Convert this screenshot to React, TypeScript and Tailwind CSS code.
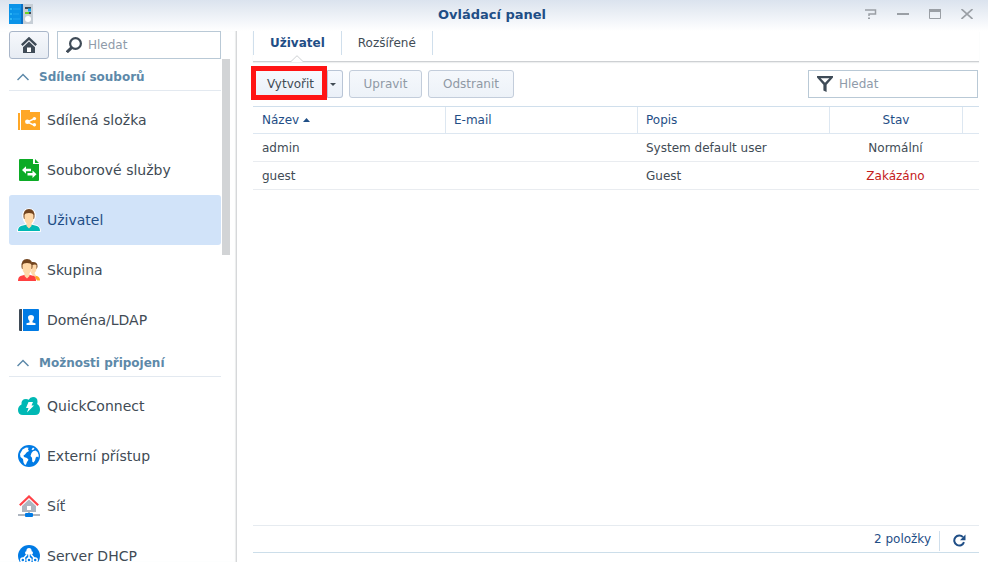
import React, { useState } from "react";

type IconProps = { className?: string };

const AppLogo = () => (
  <svg width="24" height="20" viewBox="0 0 24 20" aria-hidden="true">
    <rect x="12" width="12" height="20" fill="#c6ced6" />
    <rect width="14" height="20" fill="#0a93e8" />
    <rect x="12" width="2" height="20" fill="#0a6fc4" />
    <path d="M1 5h2M1 10h2M1 15h2" stroke="#2bb5f5" strokeWidth="2" />
    <path d="M4 5h7M4 10h6M4 15h7" stroke="#22a6f0" strokeWidth="1" />
    <path d="M16 4h6" stroke="#3d4852" strokeWidth="2" />
    <path d="M19 6h3" stroke="#16a8f0" strokeWidth="3" />
    <path d="M16 9h4" stroke="#6ed321" strokeWidth="2" />
    <path d="M20 9h2" stroke="#3d4852" strokeWidth="2" />
    <circle cx="19" cy="15" r="3" fill="#fff" />
  </svg>
);

const HomeIcon = () => (
  <svg width="16" height="16" viewBox="0 0 16 16" aria-hidden="true">
    <path d="M.8 8.200 8 1.400l7.200 6.800" fill="none" stroke="#3f4b57" strokeWidth="2.400" />
    <path d="M8 4.600 14 10.200V16H2v-5.800z" fill="#3f4b57" />
    <path d="M6 10.500h4V15H6z" fill="#fff" />
  </svg>
);

const SearchIcon = ({ className }: IconProps) => (
  <svg className={className} width="16" height="16" viewBox="0 0 16 16" fill="none" stroke="#3f4b57" aria-hidden="true">
    <circle cx="9.500" cy="6.500" r="5.400" strokeWidth="2.200" />
    <path d="M5.600 10.600.8 15.200" strokeWidth="3" />
  </svg>
);

const FilterIcon = ({ className }: IconProps) => (
  <svg className={className} width="16" height="16" viewBox="0 0 16 16" aria-hidden="true">
    <path
      fillRule="evenodd"
      fill="#3f4b57"
      d="M0 0h16v1.500L9.600 8.800V16L6.400 14.500V8.800L0 1.500zM3.600 2.200 8 6.800l4.400-4.600z"
    />
  </svg>
);

const FolderIcon = () => (
  <svg width="22" height="20" viewBox="0 0 22 20" aria-hidden="true">
    <path d="M0 3h2v17H0zM3 0h9v2h10v18H3z" fill="#ffa726" />
    <path d="M17 8.400 9.300 12 17 15.600" fill="none" stroke="#fff" strokeWidth="1.600" />
    <circle cx="9.300" cy="11.700" r="2.200" fill="#fff" />
    <circle cx="16.400" cy="8.600" r="1.700" fill="#fff" />
    <circle cx="16.400" cy="14.800" r="1.700" fill="#fff" />
  </svg>
);

const FileServiceIcon = () => (
  <svg width="22" height="22" viewBox="0 0 22 22" aria-hidden="true">
    <path d="M1 1q0-1 1-1h13v5h6v16q0 1-1 1H2q-1 0-1-1z" fill="#0cab26" />
    <path d="M17 0 21 4h-4z" fill="#0cab26" />
    <path d="M4 11 8 7.200v2.600h5v2.400H8v2.600z" fill="#fff" />
    <path d="M18.500 15.200 14.500 11.400V14H9.500v2.400h5V19z" fill="#fff" />
  </svg>
);

const UserIcon = () => (
  <svg width="24" height="24" viewBox="-1 -1 24 24" aria-hidden="true">
    <path
      d="M11-.2q6.800 0 6.300 8L16 12l-2 3.400 5.500 1.200Q22.500 18 22.500 22.500h-23q0-4.500 3-5.900L8 15.400 6 12 4.700 7.800Q4.200-.2 11-.2z"
      fill="#fff"
      stroke="#fff"
      strokeWidth="1"
    />
    <path d="M0 22q0-4 3-5l5-1.200h6l5 1.200q3 1 3 5z" fill="#00b8b4" />
    <path d="M5.500 8Q5 0 11 0t5.500 8L16 10H6z" fill="#72441e" />
    <path d="M6.500 6Q7 4 11 4t4.500 2v4q0 2.500-2 4.500v2.500L11 19.500 8.500 17v-2.500q-2-2-2-4.500z" fill="#ffd8a8" />
  </svg>
);

const GroupIcon = () => (
  <svg width="22" height="22" viewBox="0 0 22 22" aria-hidden="true">
    <path d="M16 16.500l3 .5q3 1 3 4.500h-3z" fill="#ffa726" />
    <path d="M14 3q6-.5 5.500 5l-1 2H14z" fill="#72441e" />
    <path d="M14 6q3.500-1 4.500 0v4q0 2-2 4l1.500 3-1.500 1.500L13 14z" fill="#ffd8a8" />
    <path d="M0 22q0-4 2.500-5L7 15.800h4l5 1.200q2 1 2 5z" fill="#ff4040" />
    <path d="M3.500 8Q3 0 9 0t5.500 8L14 10H4z" fill="#72441e" />
    <path d="M4.500 6Q5 4 9 4t4.500 2v4q0 2.500-2 4.500v2.500L9 19.500 6.500 17v-2.500q-2-2-2-4.500z" fill="#ffd8a8" />
  </svg>
);

const DomainIcon = () => (
  <svg width="22" height="22" viewBox="0 0 22 22" aria-hidden="true">
    <path d="M2 0h2v22H2q-1 0-1-1V1q0-1 1-1z" fill="#3f4b57" />
    <path d="M5 0h15q1 0 1 1v20q0 1-1 1H5z" fill="#007be5" />
    <path d="M10 8.500Q10 6 13 6t3 2.500q0 2-1.500 3.500v1.500l3 .7V16h-9v-1.800l3-.7V12Q10 10.500 10 8.500z" fill="#fff" />
  </svg>
);

const CloudIcon = () => (
  <svg width="22" height="18" viewBox="0 0 22 18" aria-hidden="true">
    <path d="M3.500 7.500Q3 2 8 2q1.500 0 2.700.7Q12 0 15 0q4.500 0 4.500 4.500 0 1.500-.4 2.500Q22 8.500 22 12.500q0 5.500-5 5.500H5Q0 18 0 13q0-4 3.500-5.500z" fill="#00b8b4" />
    <path d="M10.500 5H15l-1.500 3.500H16L9 15.500l1.500-4.500H8z" fill="#fff" />
  </svg>
);

const GlobeIcon = () => (
  <svg width="22" height="22" viewBox="0 0 22 22" aria-hidden="true">
    <circle cx="11" cy="11" r="11" fill="#007be5" />
    <path d="M4.500 4.500 8 2.500l2.500.2-.5 1.800 1 1.500-2.200 1.200L7 9.500l-1.500 1 .5 1.500 3 1 1.500 1.800-1.500 2.200-1 2.500-1 .5-1.500-2.500-.5-3.500-2.500-2L2 9z" fill="#fff" />
    <path d="m13.500 8 1.500-1.800 2.500-.7 2 1.500 1.200 3-.2 2.500-1.500-1-1.200 1-.8 3-1.500 2-1.200-.8-.3-4-1.500-1.700z" fill="#fff" />
    <path d="m13.500 4.500 1.500-2 1.500 1-1.500 1.700z" fill="#fff" />
  </svg>
);

const NetworkIcon = () => (
  <svg width="22" height="22" viewBox="0 0 22 22" aria-hidden="true">
    <path d="M11 4.500 18 11v6H4v-6zM0 19h22v2H0zM10 16h2v3h-2z" fill="#adb5bf" />
    <path d="M9 11h4v4H9z" fill="#fff" />
    <path d="M1.800 10.300 11 1.500l9.200 8.800" fill="none" stroke="#ff4248" strokeWidth="2.200" />
    <rect x="7" y="18" width="8" height="4" rx="1" fill="#007be5" />
  </svg>
);

const DhcpIcon = () => (
  <svg width="22" height="22" viewBox="0 0 22 22" aria-hidden="true">
    <circle cx="11" cy="11" r="11" fill="#007be5" />
    <path d="M7 8q0-1.500 1.300-1.800Q8.500 3 11 3t2.700 3.200Q15 6.500 15 8t-2 1.500H9Q7 9.500 7 8z" fill="#fff" />
    <path d="M11 9v4M9 9.500 5 14M13 9.500 17 14" stroke="#fff" strokeWidth="1.500" />
    <g fill="#007be5" stroke="#fff" strokeWidth="1.500">
      <circle cx="4.800" cy="15" r="2" />
      <circle cx="11" cy="15" r="2" />
      <circle cx="17.200" cy="15" r="2" />
    </g>
  </svg>
);

const RefreshIcon = () => (
  <svg width="13" height="13" viewBox="0 0 13 13" aria-hidden="true">
    <path d="M10 3.200A5 5 0 1 0 11 8.200" fill="none" stroke="#1f4e86" strokeWidth="2" />
    <path d="M12.500.5v5.700H7z" fill="#1f4e86" />
  </svg>
);

const sections = [
  {
    title: "Sdílení souborů",
    items: [
      { id: "share", label: "Sdílená složka", Icon: FolderIcon },
      { id: "file", label: "Souborové služby", Icon: FileServiceIcon },
      { id: "user", label: "Uživatel", Icon: UserIcon },
      { id: "group", label: "Skupina", Icon: GroupIcon },
      { id: "domain", label: "Doména/LDAP", Icon: DomainIcon },
    ],
  },
  {
    title: "Možnosti připojení",
    items: [
      { id: "quickconnect", label: "QuickConnect", Icon: CloudIcon },
      { id: "external", label: "Externí přístup", Icon: GlobeIcon },
      { id: "network", label: "Síť", Icon: NetworkIcon },
      { id: "dhcp", label: "Server DHCP", Icon: DhcpIcon },
    ],
  },
];

const users = [
  { name: "admin", email: "", description: "System default user", status: "Normální", disabled: false },
  { name: "guest", email: "", description: "Guest", status: "Zakázáno", disabled: true },
];

const TitleBar = () => (
  <header className="grid h-[31px] shrink-0 grid-cols-[1fr_auto_1fr] items-center bg-linear-to-b from-[#dbe3ee] to-white pr-[13px] pl-[9px]">
    <div className="pb-[3px]">
      <AppLogo />
    </div>
    <h1 className="pb-[2px] text-[13px] leading-4 font-bold text-[#1f4e86]">Ovládací panel</h1>
    <div className="flex items-center justify-end gap-4 pb-[3px]">
      <button aria-label="Nápověda" className="flex h-4 w-4 items-center justify-center">
        <svg width="12" height="10" viewBox="0 0 12 10" fill="none" stroke="#9a9fa5" strokeWidth="1.500">
          <path d="M0 1h10.500v4H4v2" />
          <path d="M3 9.200h2" />
        </svg>
      </button>
      <button aria-label="Minimalizovat" className="flex h-4 w-4 items-center justify-center">
        <svg width="12" height="2" viewBox="0 0 12 2">
          <path d="M0 1h12" stroke="#9a9fa5" strokeWidth="2" />
        </svg>
      </button>
      <button aria-label="Maximalizovat" className="flex h-4 w-4 items-center justify-center">
        <svg width="12" height="10" viewBox="0 0 12 10" fill="none" stroke="#9a9fa5">
          <path d="M0 1.500h12" strokeWidth="3" />
          <path d="M.5 1v8.500h11V1" />
        </svg>
      </button>
      <button aria-label="Zavřít" className="flex h-4 w-4 items-center justify-center">
        <svg width="12" height="10" viewBox="0 0 12 10" fill="none" stroke="#9a9fa5" strokeWidth="1.600">
          <path d="M.5 0l11 10M11.500 0l-11 10" />
        </svg>
      </button>
    </div>
  </header>
);

interface SidebarProps {
  active: string;
  onSelect: (id: string) => void;
}

const Sidebar = ({ active, onSelect }: SidebarProps) => (
  <aside className="flex w-[237px] shrink-0 flex-col border-r border-[#d6d8da] pl-[9px] shadow-[inset_-1px_0_1px_#eceded]">
    <div className="flex w-[212px] shrink-0 gap-2">
      <button
        aria-label="Domů"
        className="flex h-7 w-10 items-center justify-center rounded-[3px] border border-[#a9b6c9] bg-linear-to-b from-[#f6f8fc] to-[#e7ecf3]"
      >
        <HomeIcon />
      </button>
      <label className="flex h-7 min-w-0 flex-1 items-center gap-[6px] border border-[#b9c9d6] bg-white pl-2">
        <SearchIcon className="shrink-0" />
        <input
          type="text"
          aria-label="Hledat v nastavení"
          placeholder="Hledat"
          className="min-w-0 flex-1 text-xs text-[#414b55] outline-none placeholder:text-[#8f9baa]"
        />
      </label>
    </div>
    <div className="flex min-h-0 flex-1 gap-px">
      <nav className="w-[212px] overflow-hidden">
        {sections.map((section) => (
          <section key={section.title}>
            <button className="mb-1 flex h-8 w-full items-center gap-[10px] border-b border-[#e3e9f0] pt-1 pl-2 text-xs font-bold text-[#5d89a9]">
              <svg width="12" height="8" viewBox="0 0 12 8" fill="none" stroke="#5d89a9" strokeWidth="1.500">
                <path d="M.5 7 6 1.500 11.500 7" />
              </svg>
              {section.title}
            </button>
            <ul>
              {section.items.map(({ id, label, Icon }) => (
                <li key={id}>
                  <button
                    onClick={() => onSelect(id)}
                    className={`flex h-[50px] w-full items-center gap-[6px] rounded-[3px] pl-2 text-sm leading-4 ${
                      id === active ? "bg-[#d1e3f9] text-[#1f4e86]" : "text-[#414b55]"
                    }`}
                  >
                    <span className="flex w-6 shrink-0 justify-center">
                      <Icon />
                    </span>
                    {label}
                  </button>
                </li>
              ))}
            </ul>
          </section>
        ))}
      </nav>
      <div className="h-[196px] w-2 bg-[#d2d4d6]" />
    </div>
  </aside>
);

const App = () => {
  const [active, setActive] = useState("user");

  return (
    <div className="flex h-screen flex-col overflow-hidden bg-white font-['DejaVu_Sans',Verdana,sans-serif] text-xs text-[#414b55]">
      <TitleBar />
      <div className="flex min-h-0 flex-1">
        <Sidebar active={active} onSelect={setActive} />

        <main className="flex min-w-0 flex-1 flex-col pr-[9px] pb-[9px] pl-4">
          <div role="tablist" className="flex h-[31px] shrink-0 border-b border-[#cdd0d3] shadow-[0_1px_1px_#eeeff0]">
            <button
              role="tab"
              aria-selected="true"
              className="relative h-6 border-x border-[#d0dfec] px-4 font-bold text-[#1f4e86]"
            >
              Uživatel
              {/* pointer rising from the line under the tabs */}
              <svg className="absolute top-6 left-[37px]" width="12" height="7" viewBox="0 0 12 7">
                <path d="M0 6.500 6 .7l6 5.800V7H0z" fill="#fff" />
                <path d="M0 6.500 6 .7l6 5.800" fill="none" stroke="#cdd0d3" />
              </svg>
            </button>
            <button role="tab" aria-selected="false" className="h-6 border-r border-[#d0dfec] px-4">
              Rozšířené
            </button>
          </div>

          <div className="flex shrink-0 items-center justify-between py-2">
            <div className="flex gap-[6px]">
              <div className="relative flex">
                <button className="h-7 w-[75px] rounded-l-[3px] border border-[#b9c5d6] bg-linear-to-b from-[#f6f9fe] to-[#eaf0f8]">
                  Vytvořit
                </button>
                <button
                  aria-label="Další možnosti"
                  className="flex h-7 w-[15px] items-center rounded-r-[3px] border border-l-0 border-[#b9c5d6] bg-linear-to-b from-[#f6f9fe] to-[#eaf0f8] pl-[2px]"
                >
                  <svg width="6" height="3" viewBox="0 0 6 3">
                    <path d="M0 0h6L3 3z" fill="#414b55" />
                  </svg>
                </button>
                <div className="pointer-events-none absolute -top-1 -left-[2px] h-[34px] w-[76px] border-5 border-[#ff1414]" />
              </div>
              <button
                disabled
                className="h-7 w-[73px] rounded-[3px] border border-[#c3cddb] bg-linear-to-b from-[#f5f8fc] to-[#edf2f8] text-[#8f99a5]"
              >
                Upravit
              </button>
              <button
                disabled
                className="h-7 w-[86px] rounded-[3px] border border-[#c3cddb] bg-linear-to-b from-[#f5f8fc] to-[#edf2f8] text-[#8f99a5]"
              >
                Odstranit
              </button>
            </div>
            <label className="mr-px flex h-7 w-[170px] items-center gap-[6px] border border-[#b9c9d6] bg-white pl-2">
              <FilterIcon className="shrink-0" />
              <input
                type="text"
                aria-label="Filtrovat uživatele"
                placeholder="Hledat"
                className="min-w-0 flex-1 text-xs text-[#414b55] outline-none placeholder:text-[#8f9baa]"
              />
            </label>
          </div>

          <table className="w-full table-fixed border-separate border-spacing-0 border-t border-[#d0dfec] text-left">
            <thead className="text-[#1f4e86]">
              <tr className="h-[27px]">
                <th className="w-[193px] border-r border-b border-[#dde7f1] px-[9px] font-normal">
                  <span className="flex items-center gap-1">
                    Název
                    <svg width="7" height="4" viewBox="0 0 7 4">
                      <path d="M0 4h7L3.500 0z" fill="#1f4e86" />
                    </svg>
                  </span>
                </th>
                <th className="w-[192px] border-r border-b border-[#dde7f1] px-2 font-normal">E-mail</th>
                <th className="w-[192px] border-r border-b border-[#dde7f1] px-2 font-normal">Popis</th>
                <th className="w-[133px] border-r border-b border-[#dde7f1] px-2 text-center font-normal">Stav</th>
                <td className="border-b border-[#dde7f1]" />
              </tr>
            </thead>
            <tbody>
              {users.map((user) => (
                <tr key={user.name} className="h-7">
                  <td className="border-b border-[#e9ecf0] px-[9px]">{user.name}</td>
                  <td className="border-b border-[#e9ecf0] px-2">{user.email}</td>
                  <td className="border-b border-[#e9ecf0] px-2">{user.description}</td>
                  <td
                    className={`border-b border-[#e9ecf0] pr-[10px] pl-2 text-center ${user.disabled ? "text-[#c4201c]" : ""}`}
                  >
                    {user.status}
                  </td>
                  <td className="border-b border-[#e9ecf0]" />
                </tr>
              ))}
            </tbody>
          </table>

          <footer className="mt-auto flex h-7 shrink-0 items-center justify-end border-t border-b border-t-[#e6ebf0] border-b-[#ccdeea] text-[#1f4e86]">
            <span className="pr-2">2 položky</span>
            <span className="mt-1 h-5 border-l border-[#d0dfec]" />
            <button aria-label="Obnovit" className="flex w-[39px] items-center justify-center pt-[2px]">
              <RefreshIcon />
            </button>
          </footer>
        </main>
      </div>
    </div>
  );
};

export default App;
